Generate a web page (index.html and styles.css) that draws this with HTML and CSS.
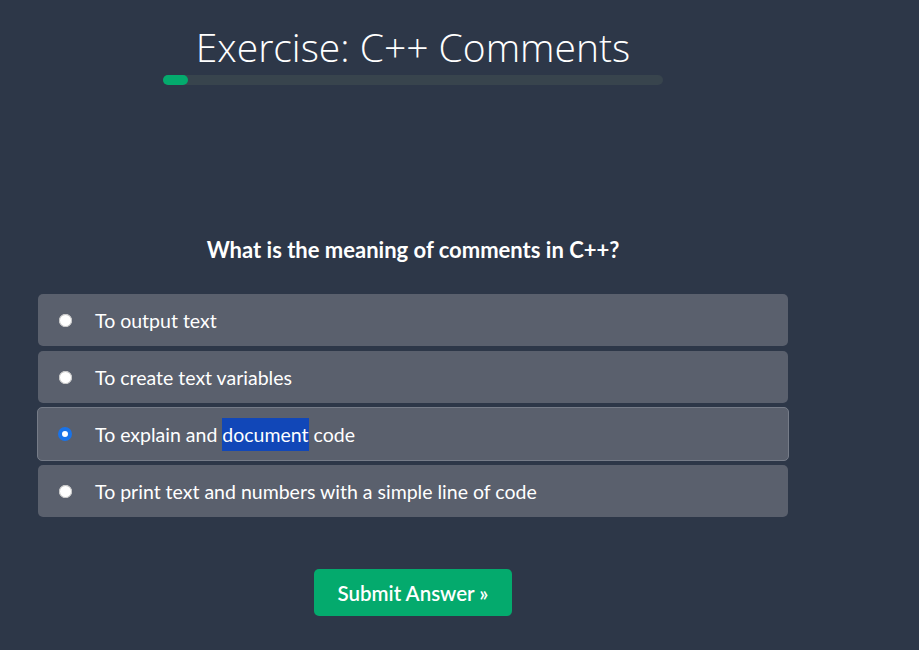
FILE: index.html
```html
<!DOCTYPE html>
<html>
<head>
<meta charset="utf-8">
<link rel="stylesheet" href="styles.css">
</head>
<body>
<div class="page">
  <header class="head">
    <h1 class="title">Exercise: C++ Comments</h1>
    <div class="progress"><div class="progress-fill"></div></div>
  </header>
  <main class="quiz">
    <h2 class="question">What is the meaning of comments in C++?</h2>
    <div class="options">
      <label class="option"><span class="radio"></span><span class="label">To output text</span></label>
      <label class="option"><span class="radio"></span><span class="label">To create text variables</span></label>
      <label class="option selected"><span class="radio checked"></span><span class="label">To explain and <span class="sel">document</span> code</span></label>
      <label class="option"><span class="radio"></span><span class="label">To print text and numbers with a simple line of code</span></label>
    </div>
    <div class="actions"><button class="submit">Submit Answer »</button></div>
  </main>
</div>
</body>
</html>
```
FILE: styles.css
```css
html, body {
  margin: 0;
  padding: 0;
  background: #2d3748;
  height: 100%;
}
body {
  font-family: "Source Sans Pro", Lato, "Noto Sans", sans-serif;
  color: #fff;
}
.page {
  width: 750px;
  margin-left: 38px;
  padding-top: 25px;
}
.head {
  width: 500px;
  margin: 0 auto;
  display: flex;
  flex-direction: column;
  align-items: center;
}
.title {
  margin: 0;
  font-family: "Open Sans", sans-serif;
  font-weight: 300;
  font-size: 39px;
  line-height: 44px;
  color: #fff;
  white-space: nowrap;
}
.progress {
  margin-top: 6px;
  width: 500px;
  height: 10px;
  border-radius: 5px;
  background: #38444d;
}
.progress-fill {
  width: 25px;
  height: 10px;
  border-radius: 5px;
  background: #04aa6d;
}
.quiz {
  padding-top: 152px;
}
.question {
  margin: 0 0 31px;
  text-align: center;
  font-size: 22px;
  font-weight: 700;
  line-height: 26px;
}
.options {
  display: flex;
  flex-direction: column;
  gap: 5px;
}
.option {
  display: flex;
  align-items: center;
  height: 52px;
  box-sizing: border-box;
  background: #5a606d;
  border-radius: 5px;
  padding-left: 21px;
  font-size: 19.5px;
}
.option.selected {
  border: 1px solid #767c88;
  margin: -1px -1px -1px;
  height: 54px;
  padding-left: 21px;
}
.radio {
  width: 13px;
  height: 13px;
  border-radius: 50%;
  background: #fff;
  box-shadow: 0 0 0 1px #c4c4c4 inset;
  flex: none;
  box-sizing: border-box;
  margin-right: 23px;
}
.radio.checked {
  width: 14px;
  height: 14px;
  margin-left: -1px;
  background: #fff;
  border: 4px solid #1a73e8;
  box-shadow: none;
}
.sel {
  background: #1147b8;
  padding: 5px 0;
}
.actions {
  display: flex;
  justify-content: center;
  margin-top: 52px;
}
.submit {
  font-family: inherit;
  font-size: 20.5px;
  font-weight: 600;
  color: #fff;
  background: #04aa6d;
  border: none;
  border-radius: 5px;
  width: 198px;
  height: 47px;
  padding: 0;
}
```
